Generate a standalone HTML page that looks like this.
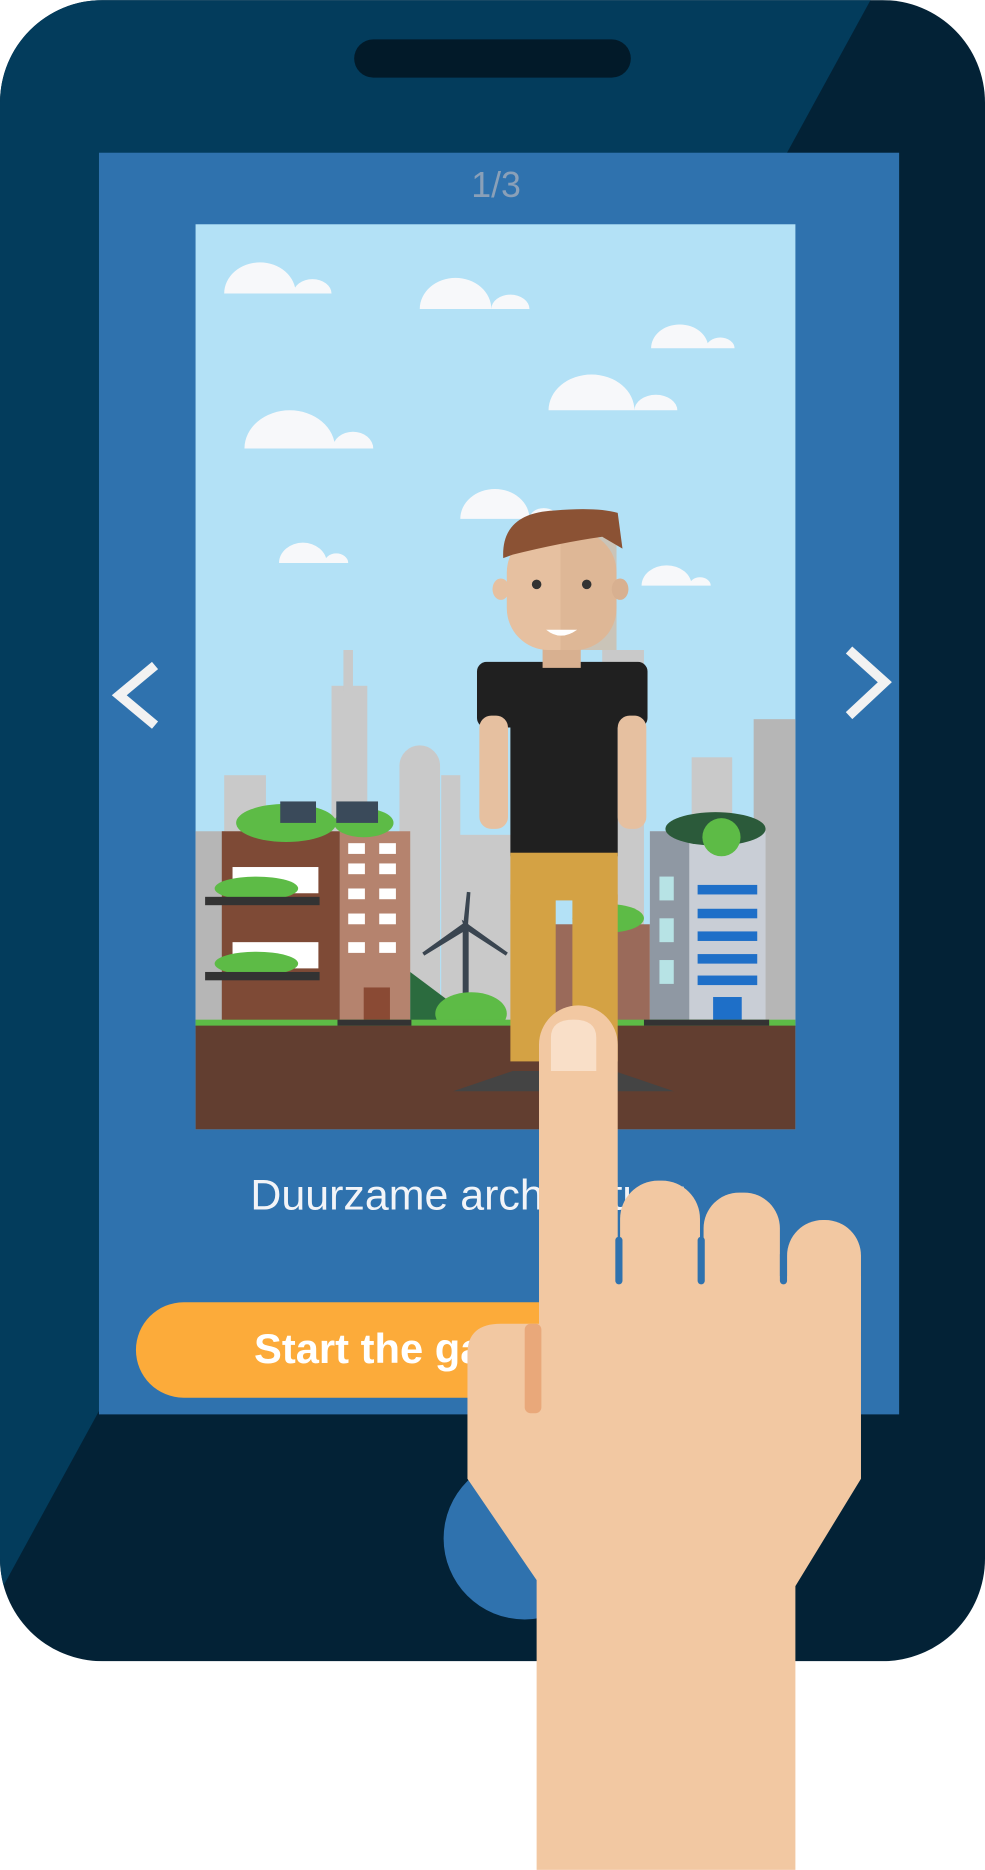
<!DOCTYPE html>
<html><head><meta charset="utf-8"><style>
html,body{margin:0;padding:0;background:#fff;}
svg{display:block}
</style></head><body>
<svg width="985" height="1870" viewBox="0 0 826 1568" xmlns="http://www.w3.org/2000/svg">
<defs><clipPath id="ph"><rect x="0" y="0" width="826" height="1393" rx="86"/></clipPath></defs>
<g clip-path="url(#ph)">
<rect x="0" y="0" width="826" height="1393" fill="#032236"/>
<polygon points="0,0 730,0 0,1335" fill="#033c5c"/>
</g>
<rect x="297" y="33" width="232" height="32" rx="16" fill="#021a29"/>
<rect x="83" y="128" width="671" height="1058" fill="#2f72ae"/>
<circle cx="440" cy="1290" r="68" fill="#2f72ae"/>
<text x="416" y="165" font-family="Liberation Sans, sans-serif" font-size="30" fill="#8aa0b8" text-anchor="middle">1/3</text>
<rect x="164" y="188" width="503" height="759" fill="#b3e1f6"/>
<g fill="#f7f8fa">
<path d="M188 246 A30 26 0 0 1 248 246 Z M246 246 A16 12 0 0 1 278 246 Z"/>
<path d="M352 259 A30 26 0 0 1 412 259 Z M412 259 A16 12 0 0 1 444 259 Z"/>
<path d="M546 292 A24 20 0 0 1 594 292 Z M592 292 A12 9 0 0 1 616 292 Z"/>
<path d="M460 344 A36 30 0 0 1 532 344 Z M532 344 A18 13 0 0 1 568 344 Z"/>
<path d="M205 376 A38 32 0 0 1 281 376 Z M279 376 A17 14 0 0 1 313 376 Z"/>
<path d="M386 435 A29 25 0 0 1 444 435 Z M444 435 A12 9 0 0 1 468 435 Z"/>
<path d="M234 472 A20 17 0 0 1 274 472 Z M272 472 A10 8 0 0 1 292 472 Z"/>
<path d="M538 491 A21 17 0 0 1 580 491 Z M578 491 A9 7 0 0 1 596 491 Z"/>
</g>
<g fill="#c9c9c9">
<rect x="278" y="575" width="30" height="290"/><rect x="288" y="545" width="8" height="35"/>
<rect x="188" y="650" width="35" height="220"/>
<rect x="335" y="625" width="34" height="245" rx="17"/>
<rect x="370" y="650" width="16" height="220"/>
<rect x="382" y="700" width="50" height="170"/>
<rect x="505" y="545" width="35" height="320"/>
<rect x="580" y="635" width="34" height="230"/>
<rect x="632" y="603" width="35" height="260" fill="#b6b6b6"/>
<rect x="164" y="697" width="25" height="170" fill="#b6b6b6"/>
</g>
<rect x="186" y="697" width="99" height="160" fill="#7e4a36"/>
<rect x="285" y="697" width="59" height="160" fill="#b5836e"/>
<ellipse cx="240" cy="690" rx="42" ry="16" fill="#5dbb46"/>
<ellipse cx="305" cy="690" rx="25" ry="12" fill="#5dbb46"/>
<rect x="235" y="672" width="30" height="18" fill="#3a4a5a"/><rect x="282" y="672" width="35" height="18" fill="#3a4a5a"/>
<g fill="#fff"><rect x="292" y="707" width="14" height="9"/><rect x="318" y="707" width="14" height="9"/><rect x="292" y="724" width="14" height="9"/><rect x="318" y="724" width="14" height="9"/><rect x="292" y="745" width="14" height="9"/><rect x="318" y="745" width="14" height="9"/><rect x="292" y="766" width="14" height="9"/><rect x="318" y="766" width="14" height="9"/><rect x="292" y="790" width="14" height="9"/><rect x="318" y="790" width="14" height="9"/>
<rect x="195" y="727" width="72" height="22"/><rect x="195" y="790" width="72" height="22"/></g>
<rect x="305" y="828" width="22" height="29" fill="#8a4a34"/>
<ellipse cx="215" cy="745" rx="35" ry="10" fill="#5dbb46"/><rect x="172" y="752" width="96" height="7" fill="#333"/>
<ellipse cx="215" cy="808" rx="35" ry="10" fill="#5dbb46"/><rect x="172" y="815" width="96" height="7" fill="#333"/>
<rect x="388" y="775" width="5" height="82" fill="#3a4550"/>
<path d="M390 775 L393 748 L391 775 Z M390 775 L355 800 L391 778 Z M390 775 L425 800 L391 778Z" fill="#3a4550" stroke="#3a4550" stroke-width="3"/>
<path d="M344 815 L400 857 L344 857Z" fill="#2b6b3e"/>
<ellipse cx="395" cy="850" rx="30" ry="18" fill="#5dbb46"/>
<rect x="455" y="775" width="90" height="82" fill="#9a6a5a"/>
<ellipse cx="510" cy="770" rx="30" ry="12" fill="#5dbb46"/>
<rect x="545" y="697" width="97" height="160" fill="#c9ced6"/><rect x="545" y="697" width="33" height="160" fill="#8f98a3"/>
<ellipse cx="600" cy="695" rx="42" ry="14" fill="#2b5a3a"/><circle cx="605" cy="702" r="16" fill="#5dbb46"/>
<g fill="#1e6fc8"><rect x="585" y="742" width="50" height="8"/><rect x="585" y="762" width="50" height="8"/><rect x="585" y="781" width="50" height="8"/><rect x="585" y="800" width="50" height="8"/><rect x="585" y="818" width="50" height="8"/><rect x="598" y="836" width="24" height="21"/></g>
<g fill="#b7e3e5"><rect x="553" y="735" width="12" height="20"/><rect x="553" y="770" width="12" height="20"/><rect x="553" y="805" width="12" height="20"/></g>
<rect x="164" y="855" width="503" height="6" fill="#5dbb46"/>
<rect x="164" y="860" width="503" height="87" fill="#623e30"/>
<rect x="283" y="855" width="62" height="5" fill="#333"/><rect x="540" y="855" width="105" height="5" fill="#333"/>
<rect x="400" y="555" width="143" height="55" rx="8" fill="#202020"/>
<rect x="428" y="590" width="90" height="128" fill="#202020"/>
<rect x="402" y="600" width="24" height="95" rx="10" fill="#e6c0a0"/>
<rect x="518" y="600" width="24" height="95" rx="10" fill="#e6c0a0"/>
<rect x="428" y="715" width="90" height="40" fill="#d4a244"/>
<rect x="428" y="750" width="38" height="140" fill="#d4a244"/><rect x="480" y="750" width="38" height="140" fill="#d4a244"/>
<path d="M380 915 L430 898 L462 898 L462 915Z M565 915 L515 898 L500 898 L500 915Z" fill="#444"/>
<rect x="455" y="535" width="32" height="25" fill="#d8b090"/>
<rect x="425" y="445" width="92" height="100" rx="35" fill="#e6c0a0"/>
<rect x="470" y="445" width="47" height="100" fill="#d8b090" opacity="0.6"/>
<path d="M422 468 Q420 430 465 428 Q500 425 518 430 L522 460 L505 450 Q470 455 430 465Z" fill="#8b5234"/>
<ellipse cx="420" cy="494" rx="7" ry="9" fill="#e6c0a0"/><ellipse cx="520" cy="494" rx="7" ry="9" fill="#d8b090"/>
<circle cx="450" cy="490" r="4" fill="#333"/><circle cx="492" cy="490" r="4" fill="#333"/>
<path d="M458 528 Q470 538 484 528Z" fill="#fff"/>
<path d="M130 558 L100 583 L130 608" fill="none" stroke="#f2f2f2" stroke-width="8"/>
<path d="M712 545 L742 572 L712 600" fill="none" stroke="#f2f2f2" stroke-width="8"/>
<text x="210" y="1014" font-family="Liberation Sans, sans-serif" font-size="36" fill="#f2f4f8">Duurzame architectuur</text>
<rect x="114" y="1092" width="420" height="80" rx="40" fill="#fcab3a"/>
<text x="213" y="1143" font-family="Liberation Sans, sans-serif" font-size="35" font-weight="bold" fill="#fff">Start the game</text>
<g fill="#f2c8a2">
<rect x="452" y="843" width="66" height="300" rx="33"/>
<rect x="520" y="990" width="67" height="150" rx="32"/>
<rect x="590" y="1000" width="64" height="140" rx="30"/>
<rect x="660" y="1023" width="62" height="120" rx="30"/>
<path d="M392 1135 Q392 1110 420 1110 L455 1110 L455 1070 L722 1070 L722 1240 L667 1330 L667 1568 L450 1568 L450 1325 L392 1240Z"/>
</g>
<g stroke="#2f72ae" stroke-width="6" stroke-linecap="round">
<line x1="519" y1="1040" x2="519" y2="1074"/><line x1="588" y1="1040" x2="588" y2="1074"/><line x1="657" y1="1052" x2="657" y2="1074"/>
</g>
<rect x="440" y="1110" width="14" height="75" rx="5" fill="#e9a87a"/>
<path d="M462 898 L462 870 Q462 855 481 855 Q500 855 500 870 L500 898Z" fill="#f9dfc8"/>
</svg>
</body></html>
